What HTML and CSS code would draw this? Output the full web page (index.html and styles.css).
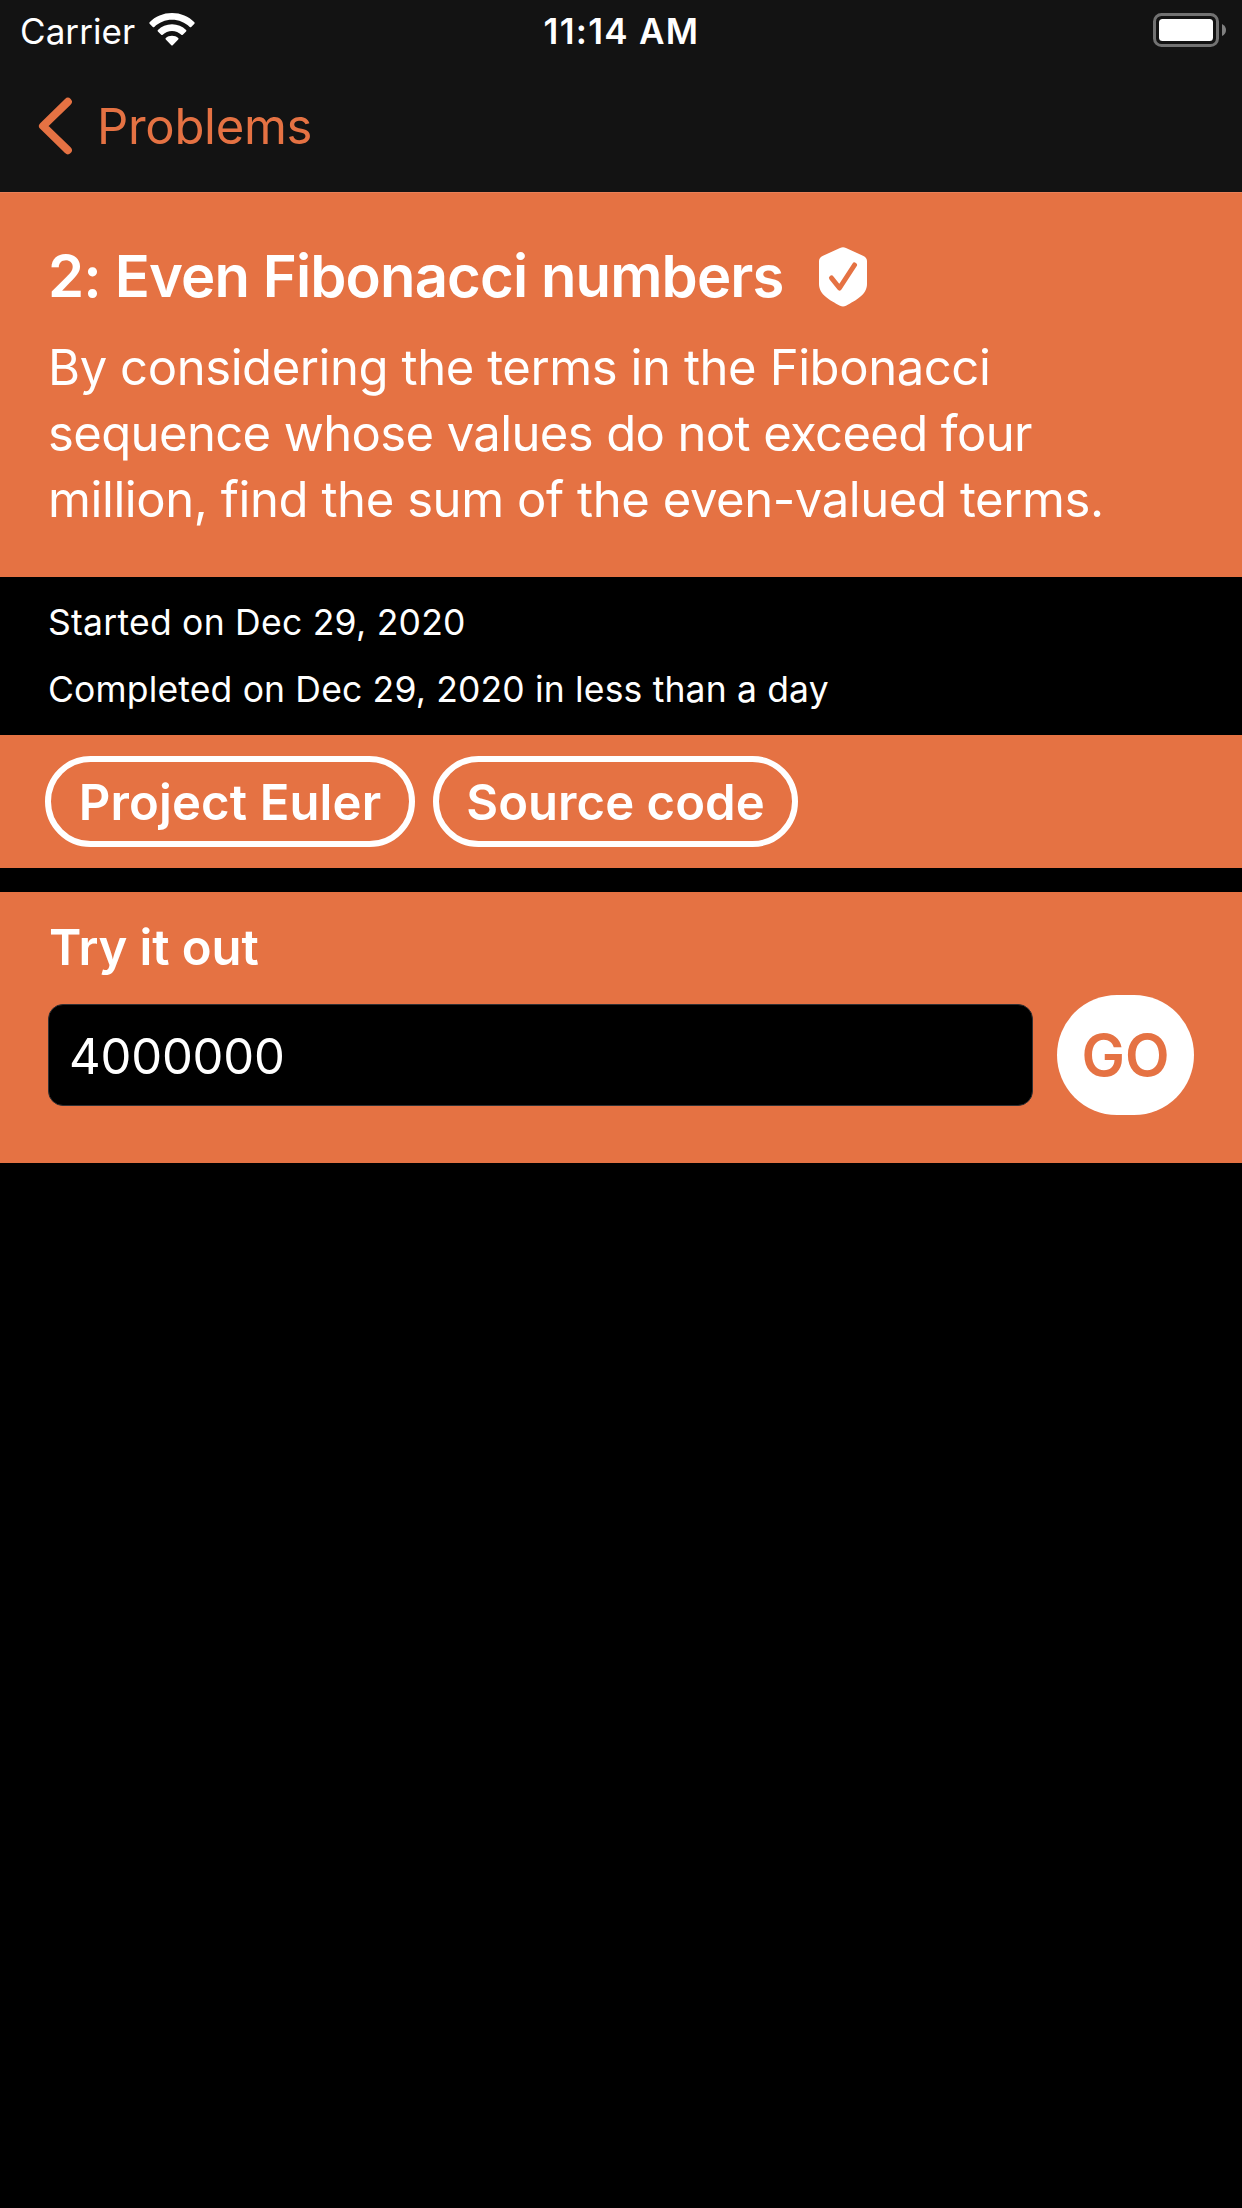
FILE: index.html
```html
<!DOCTYPE html>
<html lang="en">
<head>
<meta charset="utf-8">
<title>Even Fibonacci numbers</title>
<link rel="stylesheet" href="styles.css">
</head>
<body>
<header class="top">
  <div class="status">
    <div class="status-left">
      <span class="carrier">Carrier</span>
      <svg class="wifi" viewBox="0 0 46 34" width="46" height="34" fill="#fff">
        <path d="M23 0C31.800 0 39.700 3.400 45.400 9.200Q46 10 45.400 10.700L42.200 13.900Q41.400 14.500 40.700 13.900C36 9.400 29.800 6.700 23 6.700S10 9.400 5.300 13.900Q4.600 14.500 3.800 13.900L.6 10.700Q0 10 .6 9.200C6.300 3.400 14.200 0 23 0Z"/>
        <path d="M23 11.300C28.600 11.300 33.400 13.400 37.100 17Q37.800 17.800 37.100 18.500L33.800 21.800Q33 22.400 32.300 21.800C29.800 19.500 26.600 18 23 18S16.200 19.500 13.700 21.800Q13 22.400 12.200 21.800L8.900 18.500Q8.200 17.800 8.900 17C12.600 13.400 17.400 11.300 23 11.300Z"/>
        <path d="M23 22.700C25.500 22.700 27.600 23.600 29.200 25Q30 25.800 29.200 26.600L23.700 32.200Q23 32.800 22.300 32.200L16.800 26.600Q16 25.800 16.800 25C18.400 23.600 20.500 22.700 23 22.700Z"/>
      </svg>
    </div>
    <span class="clock">11:14 AM</span>
    <div class="status-right">
      <svg class="battery" viewBox="0 0 73 34" width="73" height="34">
        <rect x="1.500" y="1.500" width="63" height="31" rx="7" fill="none" stroke="#727272" stroke-width="3"/>
        <rect x="6" y="6" width="54" height="22" rx="3.500" fill="#fff"/>
        <path d="M69 11Q73 13 73 17T69 23Z" fill="#808080"/>
      </svg>
    </div>
  </div>
  <nav class="nav">
    <svg class="chevron" viewBox="0 0 34 58" width="34" height="58" fill="none" stroke="#e57243" stroke-width="8" stroke-linecap="round" stroke-linejoin="round">
      <path d="M29.800 4.800L5 29L29.800 53.200"/>
    </svg>
    <span class="back">Problems</span>
  </nav>
</header>
<main>
  <section class="hero">
    <div class="title-row">
      <h1 class="title">2: Even Fibonacci numbers</h1>
      <svg class="shield" viewBox="0 0 48 60" width="48" height="60">
        <path d="M21 1Q24-.6 27 1L44 8.700Q48 10.500 48 14V37C48 48 37 53 27 58.800Q24 60.400 21 58.800C11 53 0 48 0 37V14Q0 10.500 4 8.700Z" fill="#fff"/>
        <path d="M12.500 31L20.500 41L35.500 18" fill="none" stroke="#e57243" stroke-width="5" stroke-linecap="round" stroke-linejoin="round"/>
      </svg>
    </div>
    <p class="description"><span class="line-a">By considering the terms in the Fibonacci</span><br><span class="line-b">sequence whose values do not exceed four</span><br><span class="line-a">million, find the sum of the even-valued terms.</span></p>
  </section>
  <section class="dates">
    <p class="started">Started on Dec 29, 2020</p>
    <p class="completed">Completed on Dec 29, 2020 in less than a day</p>
  </section>
  <section class="links">
    <button class="pill pill-euler">Project Euler</button>
    <button class="pill pill-source">Source code</button>
  </section>
  <section class="try">
    <h2 class="try-title">Try it out</h2>
    <div class="try-row">
      <input class="number" type="text" value="4000000">
      <button class="go">GO</button>
    </div>
  </section>
</main>
</body>
</html>
```
FILE: styles.css
```css
* { box-sizing: border-box; }

body {
  margin: 0;
  min-height: 2208px;
  background: #000;
  color: #fff;
  font-family: Inter, "Liberation Sans", sans-serif;
}

h1, h2, p { margin: 0; }

svg { display: block; flex: none; }

button, input { font-family: inherit; margin: 0; }

.top {
  height: 192px;
  background: #131313;
}

.status {
  display: grid;
  grid-template-columns: 1fr auto 1fr;
  height: 62px;
  padding: 0 16px 0 20px;
  font-size: 35px;
  line-height: 62px;
}

.status-left { display: flex; gap: 14px; }

.carrier { letter-spacing: 0.07px; }

.wifi { margin-top: 13px; }

.clock {
  margin-right: 3px;
  font-weight: 600;
  letter-spacing: 1.3px;
}

.status-right {
  display: flex;
  justify-content: flex-end;
}

.battery { margin-top: 13px; }

.nav {
  display: flex;
  align-items: center;
  gap: 25px;
  height: 128px;
  padding-left: 38px;
  color: #e57243;
  font-size: 49px;
  letter-spacing: -0.31px;
}

.hero {
  height: 385px;
  padding: 47px 48px 0;
  background: #e57243;
  border-top: 1px solid #ea8058;
}

.title-row {
  display: flex;
  align-items: center;
  gap: 35px;
  height: 72px;
}

.title {
  font-size: 58px;
  font-weight: 600;
  line-height: 72px;
  letter-spacing: -0.87px;
  white-space: nowrap;
}

.shield { margin-top: 1px; }

.description {
  margin-top: 23px;
  font-size: 49px;
  line-height: 66px;
  white-space: nowrap;
}

.line-a { letter-spacing: -0.42px; }

.line-b { letter-spacing: -0.62px; }

.dates {
  height: 158px;
  padding: 12px 48px 0;
  font-size: 35.5px;
  line-height: 67px;
}

.started { letter-spacing: 0.25px; }

.completed { letter-spacing: 0.16px; }

.links {
  display: flex;
  gap: 18px;
  height: 133px;
  padding: 21px 45px;
  background: #e57243;
}

.pill {
  height: 91px;
  padding: 2px 0 0;
  border: 6px solid #fff;
  border-radius: 46px;
  background: none;
  color: #fff;
  font-size: 49px;
  font-weight: 600;
  line-height: 77px;
}

.pill-euler {
  width: 370px;
  letter-spacing: 0.14px;
}

.pill-source {
  width: 365px;
  letter-spacing: 0.06px;
}

.try {
  height: 271px;
  margin-top: 24px;
  padding: 25px 48px 48px;
  background: #e57243;
}

.try-title {
  padding-left: 1px;
  font-size: 49px;
  font-weight: 600;
  line-height: 62px;
  letter-spacing: -0.09px;
}

.try-row {
  display: flex;
  align-items: center;
  gap: 24px;
  height: 120px;
  margin-top: 16px;
}

.number {
  flex: 1;
  min-width: 0;
  height: 102px;
  padding: 2px 20px 0;
  border: 1px solid #303033;
  border-radius: 15px;
  background: #000;
  color: #fff;
  font-size: 49px;
  letter-spacing: -0.2px;
}

.go {
  width: 137px;
  height: 120px;
  padding: 0;
  border: 0;
  border-radius: 60px;
  background: #fff;
  color: #e57243;
  font-size: 58px;
  font-weight: 600;
}
```
